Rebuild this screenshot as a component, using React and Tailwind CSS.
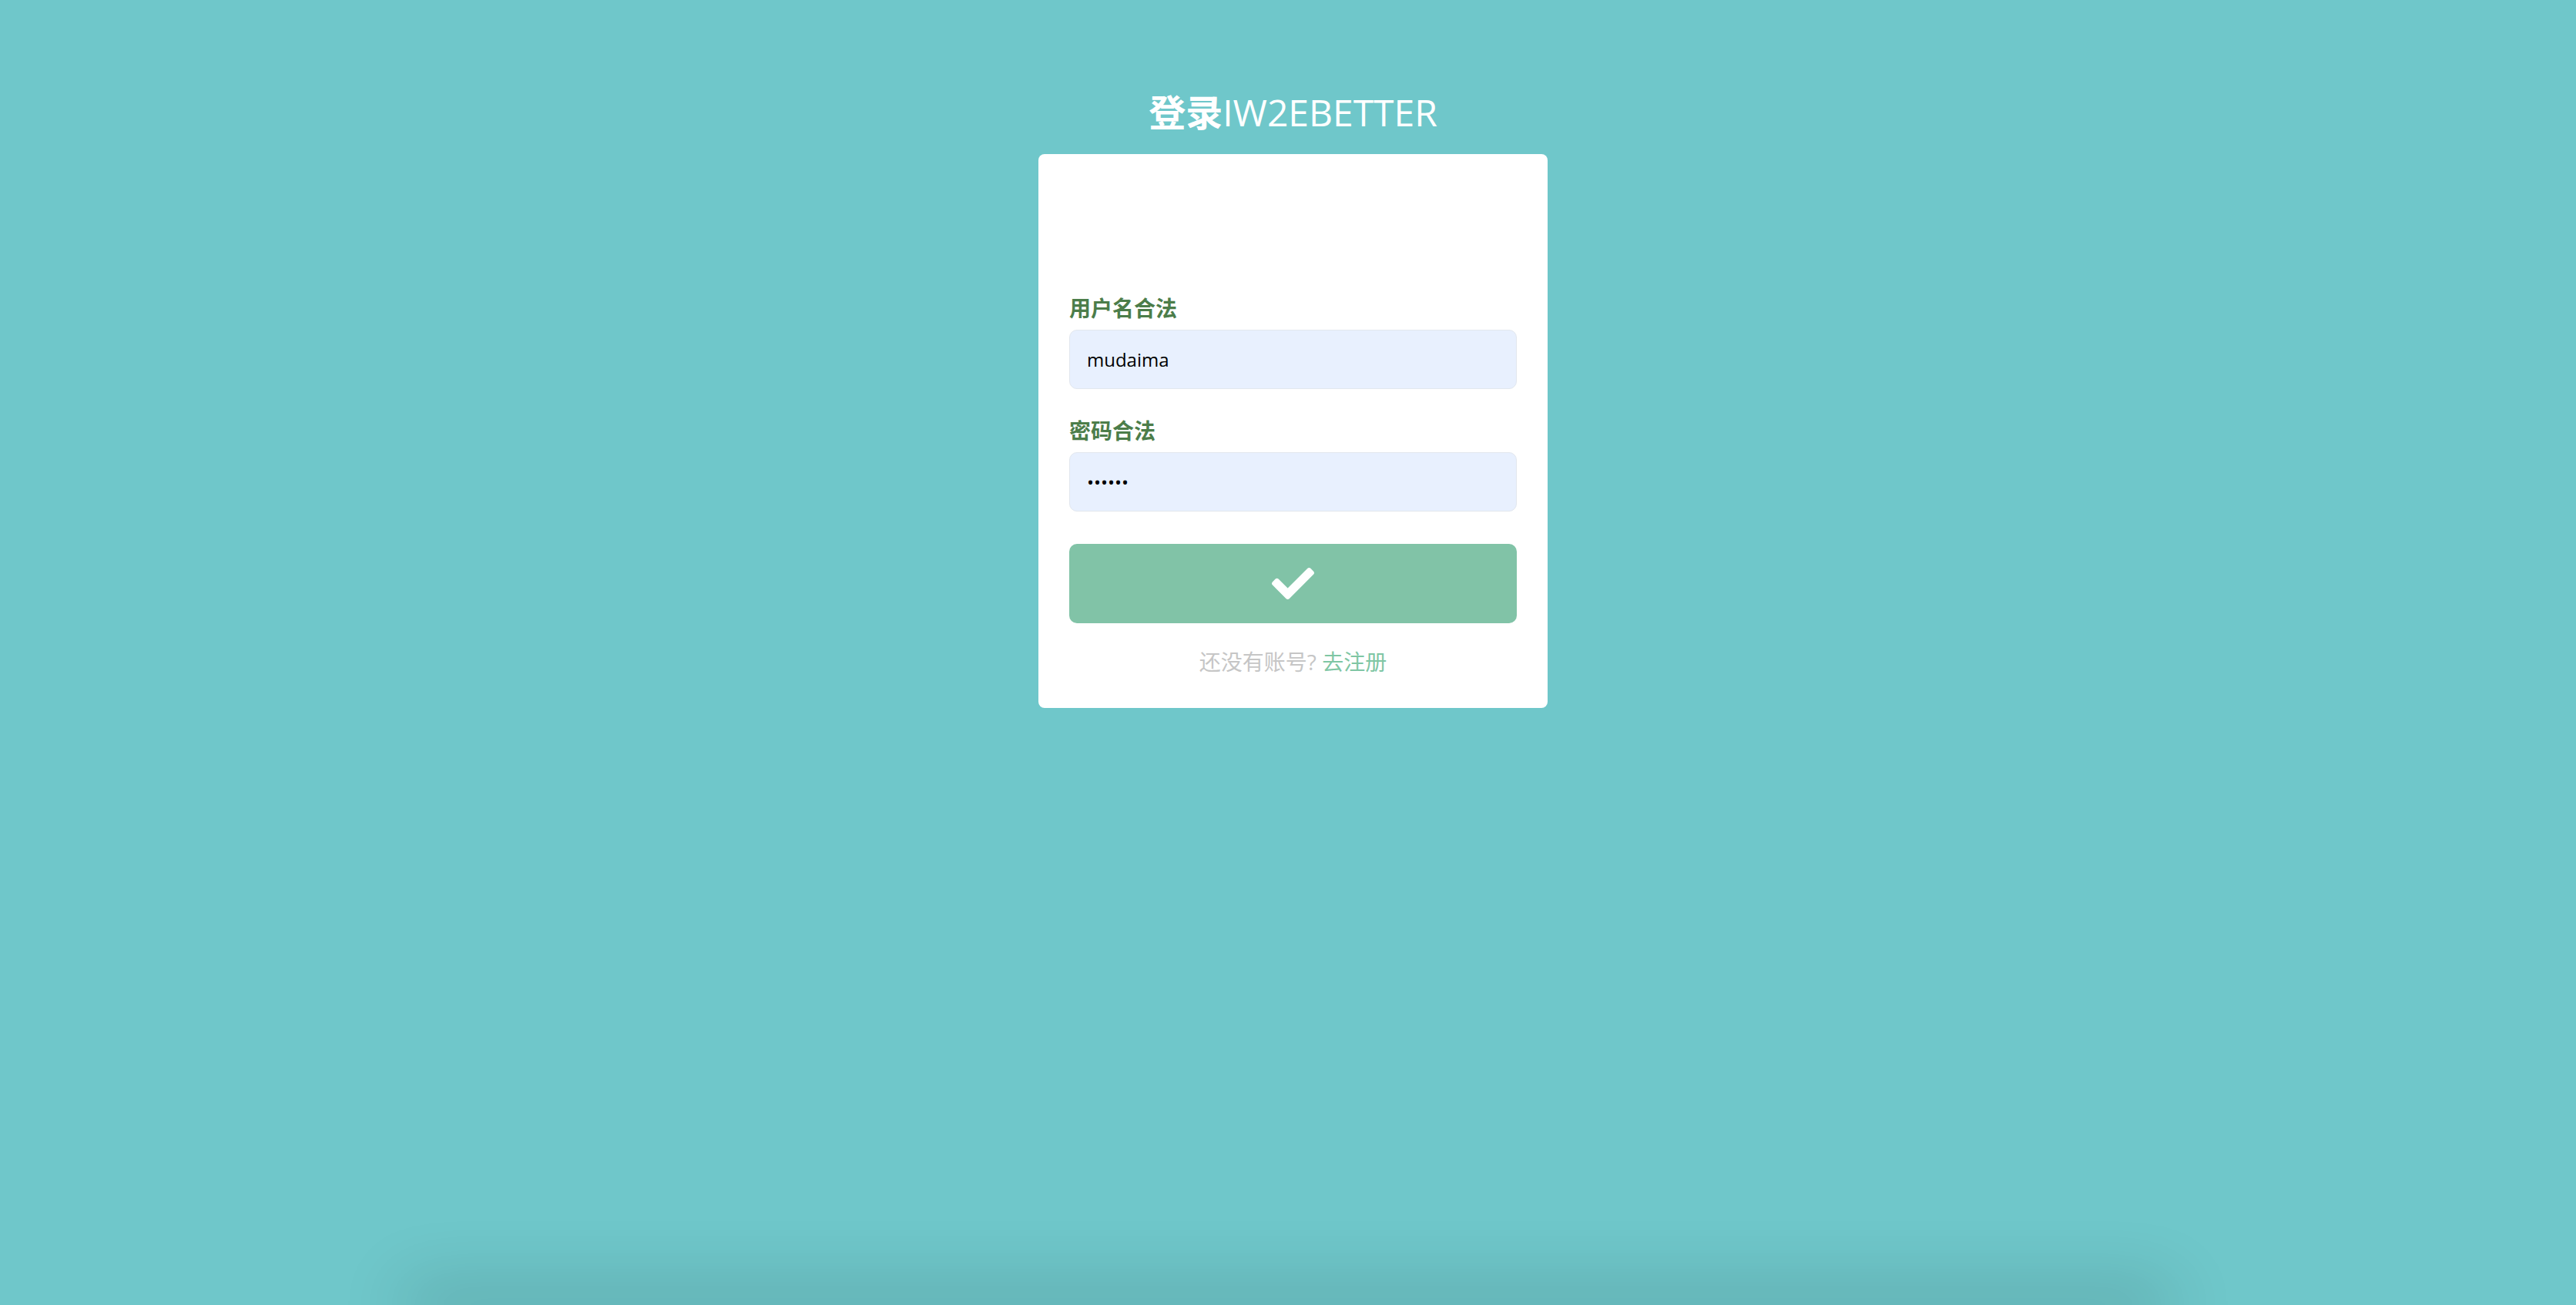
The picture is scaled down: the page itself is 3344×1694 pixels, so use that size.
import { useState } from 'react'
import { FaCheck } from 'react-icons/fa'

const font = { fontFamily: '"Open Sans", "Noto Sans CJK SC", sans-serif' }

export default function App() {
  const [username, setUsername] = useState('mudaima')
  const [password, setPassword] = useState('123456')

  return (
    <div
      className="h-screen overflow-hidden bg-[#6fc7ca] flex flex-col font-['Open_Sans','Noto_Sans_CJK_SC',sans-serif]"
      style={font}
    >
      <div className="pl-[13px] pt-[114px] flex flex-col items-center">
        <h2 className="text-[48px] leading-[64px] text-white mb-[22px]">
          <span className="font-bold">登录</span>
          <span className="font-normal">IW2EBETTER</span>
        </h2>

        <div className="w-[661px] bg-white rounded-[8px] px-[40px] pt-[180px] pb-[40px]">
          <label className="block text-[28px] leading-[40px] font-bold text-[#4c7d4a] mb-2">用户名合法</label>
          <input
            type="text"
            value={username}
            onChange={(e) => setUsername(e.target.value)}
            className="block w-full h-[77px] px-[22px] text-[24px] text-black bg-[#e8f0fe] border border-[#e2e7ee] rounded-[10px] outline-none"
          />

          <label className="block mt-[34px] text-[28px] leading-[40px] font-bold text-[#4c7d4a] mb-2">密码合法</label>
          <input
            type="password"
            value={password}
            onChange={(e) => setPassword(e.target.value)}
            className="block w-full h-[77px] px-[22px] text-[24px] text-black bg-[#e8f0fe] border border-[#e2e7ee] rounded-[10px] outline-none"
          />

          <button className="mt-[42px] w-full h-[103px] bg-[#81c3a7] rounded-[10px] flex items-center justify-center cursor-pointer">
            <FaCheck className="text-white" size={55} />
          </button>

          <p className="mt-[30px] text-center text-[28px] leading-[40px] text-[#c6c6c6]">
            还没有账号? <a className="text-[#7fc6a4] cursor-pointer">去注册</a>
          </p>
        </div>
      </div>

      <div className="mt-auto mx-auto w-[2250px] h-0 shadow-[0_0_90px_22px_rgba(0,0,0,0.2)]" />
    </div>
  )
}
